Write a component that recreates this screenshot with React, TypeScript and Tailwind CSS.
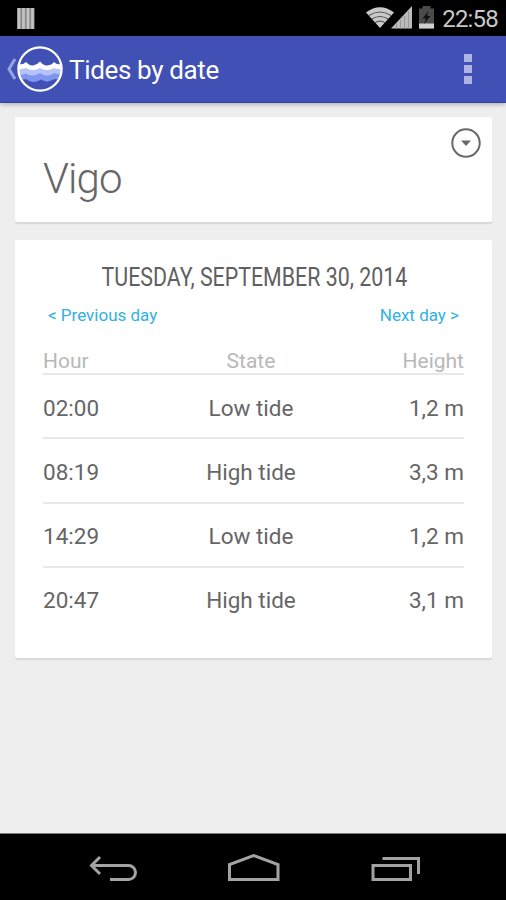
import React from 'react';

interface Tide {
  hour: string;
  state: string;
  height: string;
}

const tides: Tide[] = [
  { hour: '02:00', state: 'Low tide', height: '1,2 m' },
  { hour: '08:19', state: 'High tide', height: '3,3 m' },
  { hour: '14:29', state: 'Low tide', height: '1,2 m' },
  { hour: '20:47', state: 'High tide', height: '3,1 m' },
];

const StatusBar: React.FC = () => (
  <div className="flex h-9 items-center justify-between bg-black pl-[17px] pr-2">
    <svg width="18" height="21" viewBox="0 0 18 21" className="shrink-0">
      <path d="M0 0h17.5v21H0z" fill="#8c8c8c" />
      <path d="M2 0v21M6.5 0v21M11 0v21M15.5 0v21" stroke="#c4c4c4" strokeWidth="2.6" />
    </svg>
    <div className="flex h-full items-center">
      <svg width="70" height="36" viewBox="366 0 70 36">
        <path d="M366 12.500Q380 2 394 12.500L380 28z" fill="#c9c9c9" />
        <path
          d="M369 15.500Q380 8.500 391 15.500M372 19Q380 14 388 19M375 22.700Q380 19.500 385 22.700"
          fill="none"
          stroke="#555"
          strokeWidth="1.200"
        />
        <path d="M391 28.500L412 6v22.500z" fill="#bcbcbc" />
        <path d="M396.500 24v4.500M400.500 20v8.500M404.500 16v12.500M408.500 11v17.500" stroke="#999" strokeWidth="1" />
        <path d="M419 8.500h3.500V6h8v2.500h3.500v20h-15z" fill="#4b4b4b" />
        <path d="M419 23.500h15v5h-15z" fill="#d0d0d0" />
        <path d="M428.500 11l-6 7.500h3.500l-2 5.500 6.500-8h-3.500z" fill="#111" />
      </svg>
      <span className="ml-[6px] pt-[2px] text-[24px] leading-9 tracking-[-0.800px] text-[#c8c8c8]">22:58</span>
    </div>
  </div>
);

const TidesLogo: React.FC = () => (
  <svg width="46" height="46" viewBox="0 0 46 46" className="shrink-0">
    <defs>
      <clipPath id="logo-disc">
        <circle cx="23" cy="23" r="21" />
      </clipPath>
    </defs>
    <g clipPath="url(#logo-disc)">
      <path
        d="M0 17Q5 20 9 16Q13 20 16 19.500Q20 19 23 15.500Q27 20 30 19.500Q35 19 37 16Q41 20 46 17V34H0z"
        fill="#fff"
      />
      <path
        d="M0 22Q4 24 9 22Q12 24 16 24Q20 24 23 22Q27 24.500 31 24Q35 23.500 37 22Q41 24 46 22V38H0z"
        fill="#b4c4fa"
      />
      <path
        d="M0 27Q4 30 9 27.500Q12 30 16 29.500Q20 29 23 27Q27 30 31 29.500Q35 29 37 27Q41 29 46 27V38H0z"
        fill="#8095ee"
      />
      <path
        d="M0 33Q5 34 9 33Q12 36 16 36Q20 36 24 33.500Q28 36 31 35.500Q35 34 38 33Q41 34 46 32V46H0z"
        fill="#4050b5"
      />
    </g>
    <circle cx="23" cy="23" r="21.600" fill="none" stroke="#fff" strokeWidth="2.200" />
  </svg>
);

const AppBar: React.FC = () => (
  <header className="z-10 flex h-[67px] items-center border-b border-[#3543a0] bg-[#4050b5] pl-[6px] pr-[34px] shadow-[0_1px_5px_rgba(0,0,0,0.3)]">
    <svg width="11" height="22" viewBox="0 0 11 22" className="shrink-0">
      <path d="M9 1L3 11L9 21" fill="none" stroke="#98a4e2" strokeWidth="3" />
    </svg>
    <TidesLogo />
    <h1 className="ml-[6px] grow pt-[2px] text-[26px] leading-none tracking-[-0.350px] text-white">Tides by date</h1>
    <div className="flex flex-col gap-[3px]">
      <i className="size-2 bg-[#adb4e4]" />
      <i className="size-2 bg-[#adb4e4]" />
      <i className="size-2 bg-[#adb4e4]" />
    </div>
  </header>
);

const PlaceCard: React.FC = () => (
  <section className="flex h-[105px] items-start justify-between rounded-xs bg-white pl-7 pr-[10px] shadow-[0_2px_1px_#d9d9d9]">
    <h2 className="mt-[37px] text-[42px] font-light leading-[50px] tracking-[-0.900px] text-[#666]">Vigo</h2>
    <svg width="32" height="32" viewBox="0 0 32 32" className="mt-[10px]">
      <circle cx="16" cy="16" r="13.700" fill="none" stroke="#686868" strokeWidth="2" />
      <path d="M11 13.500h10l-5 5.500z" fill="#686868" />
    </svg>
  </section>
);

const TidesCard: React.FC = () => (
  <section className="mt-[18px] h-[418px] rounded-xs bg-white px-7 shadow-[0_2px_1px_#d9d9d9]">
    <h3 className="flex justify-center whitespace-nowrap pl-px pt-[21px] text-[25.500px] leading-8 text-[#606060]">
      <span className="scale-x-[0.838]">TUESDAY, SEPTEMBER 30, 2014</span>
    </h3>
    <div className="mt-[11px] flex justify-between px-[5px] text-[17px] leading-[22px] text-[#33b0e4]">
      <span>&lt; Previous day</span>
      <span>Next day &gt;</span>
    </div>
    <div className="mt-5 grid h-[29px] grid-cols-3 border-b-2 border-[#e8e8e8] text-[21px] leading-[31px] text-[#b8b8b8]">
      <span>Hour</span>
      <span className="pr-[5px] text-center">State</span>
      <span className="text-right">Height</span>
    </div>
    {tides.map((tide) => (
      <div
        key={tide.hour}
        className="grid h-[64.300px] grid-cols-3 border-b-2 border-[#e8e8e8] pt-[0.500px] text-[22.500px] font-[370] leading-[64px] text-[#666] last:border-0"
      >
        <span>{tide.hour}</span>
        <span className="pr-[5px] text-center">{tide.state}</span>
        <span className="text-right">{tide.height}</span>
      </div>
    ))}
  </section>
);

const NavBar: React.FC = () => (
  <nav className="h-[67px] border-t border-[#777] bg-black">
    <svg width="506" height="66" viewBox="0 834 506 66" fill="none" stroke="#a3a3a3" strokeWidth="3">
      <path d="M100 857l-8.500 8.500L100 874M92 865.500h36.500a7 7 0 010 14H110" />
      <path d="M229.500 879.500v-15L253.500 855.500l24.500 9v15z" />
      <path d="M373 865.500h37.500v14H373zM382.500 858.500H418.500V874" />
    </svg>
  </nav>
);

export default function App() {
  return (
    <div className="flex h-[900px] w-[506px] flex-col overflow-hidden bg-[#eee] font-['Roboto',sans-serif]">
      <StatusBar />
      <AppBar />
      <main className="grow pl-[15px] pr-[14px] pt-[14px]">
        <PlaceCard />
        <TidesCard />
      </main>
      <NavBar />
    </div>
  );
}
